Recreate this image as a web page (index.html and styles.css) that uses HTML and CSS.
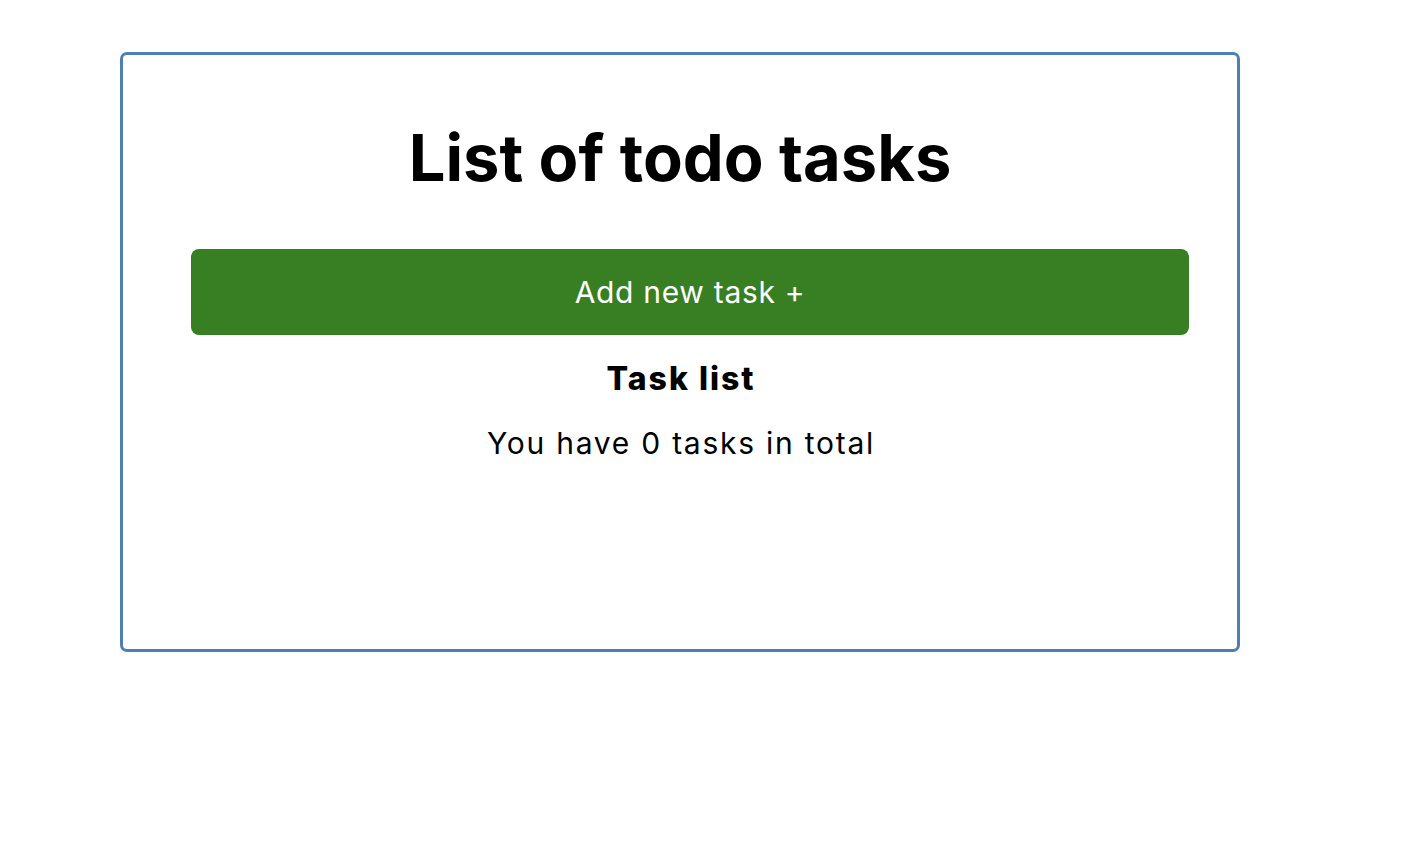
FILE: index.html
```html
<!DOCTYPE html>
<html lang="en">
<head>
<meta charset="utf-8">
<title>Todo</title>
<link rel="stylesheet" href="styles.css">
</head>
<body>
<main class="card">
  <h1 class="title">List of todo tasks</h1>
  <button class="add-btn" type="button">Add new task +</button>
  <h2 class="subtitle">Task list</h2>
  <p class="count">You have 0 tasks in total</p>
</main>
</body>
</html>
```
FILE: styles.css
```css
* { box-sizing: border-box; }
body {
  margin: 0;
  padding: 52px 0 0 120px;
  background: #fff;
  font-family: "Inter", "Open Sans", sans-serif;
  color: #000;
}
.card {
  width: 1120px;
  height: 600px;
  border: 3px solid #4d7fb0;
  border-radius: 7px;
  padding: 63px 58px 0 58px;
  display: flex;
  flex-direction: column;
}
.title {
  margin: 0;
  text-align: center;
  font-size: 65px;
  line-height: 80px;
  font-weight: 700;
}
.add-btn {
  align-self: flex-start;
  margin: 51px 0 0 10px;
  width: 998px;
  height: 86px;
  border: none;
  border-radius: 8px;
  background: #387e22;
  color: #fff;
  font-family: inherit;
  font-size: 30px;
  letter-spacing: 0.7px;
  font-weight: 400;
}
.subtitle {
  margin: 24px 0 0 0;
  padding-left: 2px;
  text-align: center;
  font-size: 32px;
  line-height: 40px;
  letter-spacing: 2px;
  font-weight: 800;
}
.count {
  margin: 26px 0 0 0;
  padding-left: 2px;
  text-align: center;
  font-size: 30px;
  line-height: 36px;
  letter-spacing: 1.75px;
}
```
